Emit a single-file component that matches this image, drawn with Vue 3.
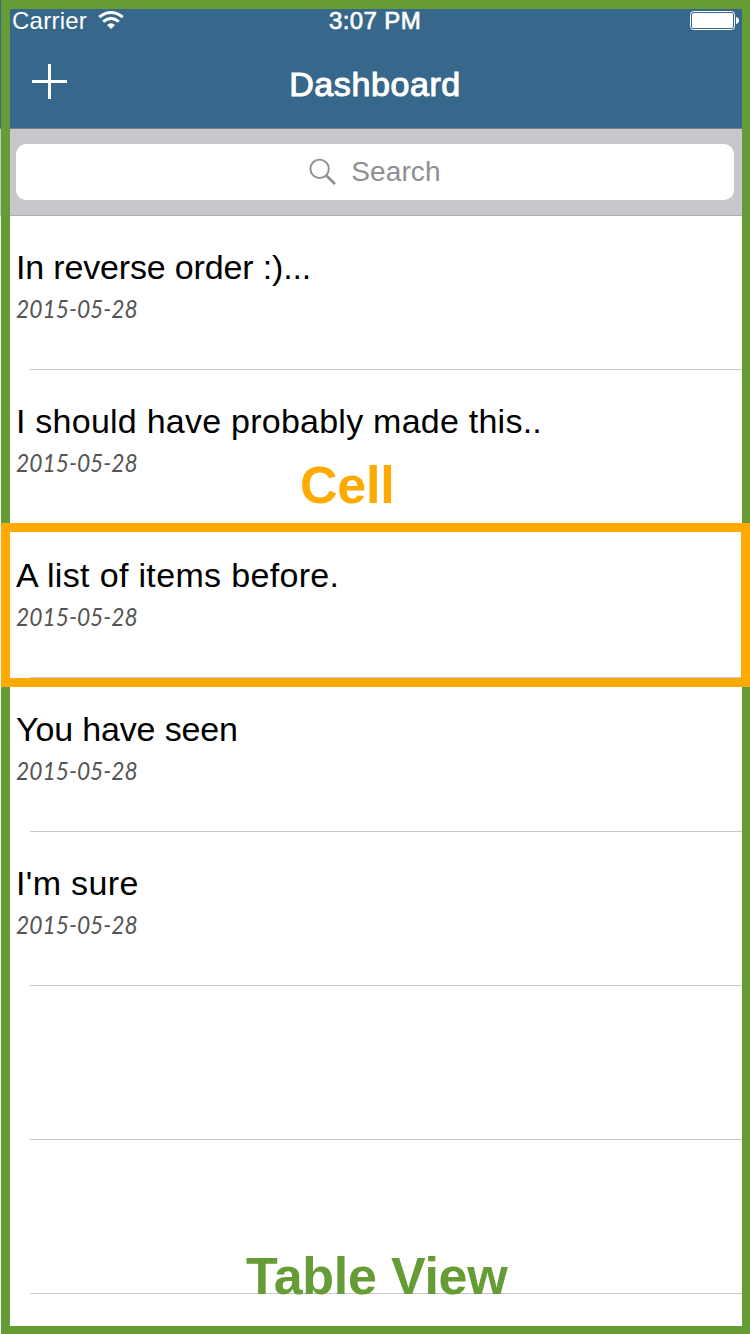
<script setup>
const rows = [
  { title: 'In reverse order :)...', date: '2015-05-28', spacing: '-0.16px' },
  { title: 'I should have probably made this..', date: '2015-05-28', spacing: '0.24px' },
  { title: 'A list of items before.', date: '2015-05-28', spacing: '0.34px', marked: true },
  { title: 'You have seen', date: '2015-05-28', spacing: '-0.15px' },
  { title: "I'm sure", date: '2015-05-28', spacing: '0.35px' },
  {},
  {},
  {},
]
</script>

<template>
  <div class="screen">
    <header class="header">
      <div class="status">
        <div class="carrier">
          <span class="carrier-name">Carrier</span>
          <svg class="wifi" width="26" height="19" viewBox="0 0 26 19">
            <path d="M1.2 6.1Q13 -3.1 24.8 6.1" fill="none" stroke="#fff" stroke-width="3" />
            <path d="M5.2 10.6Q13 4.2 20.8 10.6" fill="none" stroke="#fff" stroke-width="3" />
            <path d="M9 14Q13 10.6 17 14L13 18Z" fill="#fff" />
          </svg>
        </div>
        <span class="time">3:07 PM</span>
        <svg class="battery" width="50" height="19" viewBox="0 0 50 19">
          <rect x="0.5" y="0.5" width="44" height="18" rx="3" fill="none" stroke="#fff" />
          <rect x="2" y="2" width="41" height="15" rx="1.5" fill="#fff" />
          <path d="M46 6Q49 6.6 49 9.5Q49 12.4 46 13Z" fill="#fff" />
        </svg>
      </div>
      <div class="nav">
        <svg class="plus" width="35" height="35" viewBox="0 0 35 35">
          <path d="M0 16H35V19H0ZM16 0H19V35H16Z" fill="#fff" />
        </svg>
        <h1 class="title">Dashboard</h1>
      </div>
    </header>
    <div class="search-bar">
      <div class="field">
        <svg class="lens" width="28" height="28" viewBox="0 0 28 28">
          <circle cx="10.6" cy="10.8" r="9.2" fill="none" stroke="#8e8e93" stroke-width="1.9" />
          <path d="M17 17.2L26 26" stroke="#8e8e93" stroke-width="2.7" />
        </svg>
        <span class="placeholder">Search</span>
      </div>
    </div>
    <ul class="list">
      <li v-for="(row, i) in rows" :key="i" class="row">
        <template v-if="row.title">
          <span class="row-title" :style="{ letterSpacing: row.spacing }">{{ row.title }}</span>
          <span class="row-date">{{ row.date }}</span>
        </template>
        <div v-if="row.marked" class="cell-frame"></div>
      </li>
    </ul>
    <div class="table-frame"></div>
    <span class="label cell-label">Cell</span>
    <span class="label table-label">Table View</span>
  </div>
</template>

<style>
html, body { background: #fff; overflow: hidden; }
</style>

<style scoped>
.screen {
  position: relative;
  width: 750px;
  height: 1334px;
  overflow: hidden;
  background: #fff;
  font-family: "Liberation Sans", Helvetica, Arial, sans-serif;
}
.header {
  box-sizing: border-box;
  height: 129px;
  background: #37678a;
  border-bottom: 1px solid #80817f;
  color: #fff;
}
.status {
  display: grid;
  grid-template-columns: 1fr auto 1fr;
  height: 40px;
  padding: 0 10px 0 12px;
}
.carrier { display: flex; }
.carrier-name { font-size: 24px; line-height: 42px; letter-spacing: 0.25px; }
.wifi { margin: 11px 0 0 11px; }
.time { font-size: 24px; line-height: 42px; letter-spacing: 0.4px; margin-left: -2px; -webkit-text-stroke: 0.7px #fff; }
.battery { justify-self: end; margin-top: 11px; }
.nav {
  display: grid;
  grid-template-columns: 1fr auto 1fr;
  height: 88px;
  padding: 0 32px;
}
.plus { margin-top: 24px; }
.title {
  margin: 0;
  font-size: 34px;
  font-weight: 400;
  line-height: 88px;
  letter-spacing: 0.6px;
  -webkit-text-stroke: 1.1px #fff;
}
.search-bar {
  box-sizing: border-box;
  height: 87px;
  padding: 15px 16px;
  background: #c8c7cc;
  border-bottom: 1px solid #afaeb3;
}
.field {
  display: flex;
  justify-content: center;
  height: 56px;
  border-radius: 10px;
  background: #fff;
}
.lens { margin: 14px 14px 0 0; }
.placeholder { font-size: 28px; line-height: 56px; color: #8e8e93; letter-spacing: 0.1px; }
.list { margin: 0; padding: 0; list-style: none; }
.row {
  position: relative;
  display: flex;
  flex-direction: column;
  align-items: flex-start;
  box-sizing: border-box;
  height: 154px;
  padding: 31px 0 0 16px;
  background: linear-gradient(#c8c7cc, #c8c7cc) 30px 153px / 720px 1px no-repeat;
}
.row-title { font-size: 34px; line-height: 40px; color: #000; white-space: nowrap; }
.row-date {
  margin-top: 5px;
  font-family: Lato, "Open Sans", sans-serif;
  font-size: 25px;
  font-style: italic;
  line-height: 32px;
  color: #555;
  transform: scaleX(0.912);
  transform-origin: left;
}
.table-frame {
  position: absolute;
  inset: 0 0 0 1px;
  border: 9px solid #669c35;
  border-right-width: 8px;
  border-bottom-width: 8px;
}
.cell-frame {
  position: absolute;
  z-index: 2;
  inset: -1px 0 -9px 1px;
  border: 9px solid #ffaa00;
}
.label { position: absolute; z-index: 3; font-weight: 700; font-size: 52px; line-height: 60px; letter-spacing: -0.25px; white-space: nowrap; }
.cell-label { left: 300px; top: 455px; color: #ffaa00; }
.table-label { left: 246px; top: 1246px; color: #669c35; }
</style>
